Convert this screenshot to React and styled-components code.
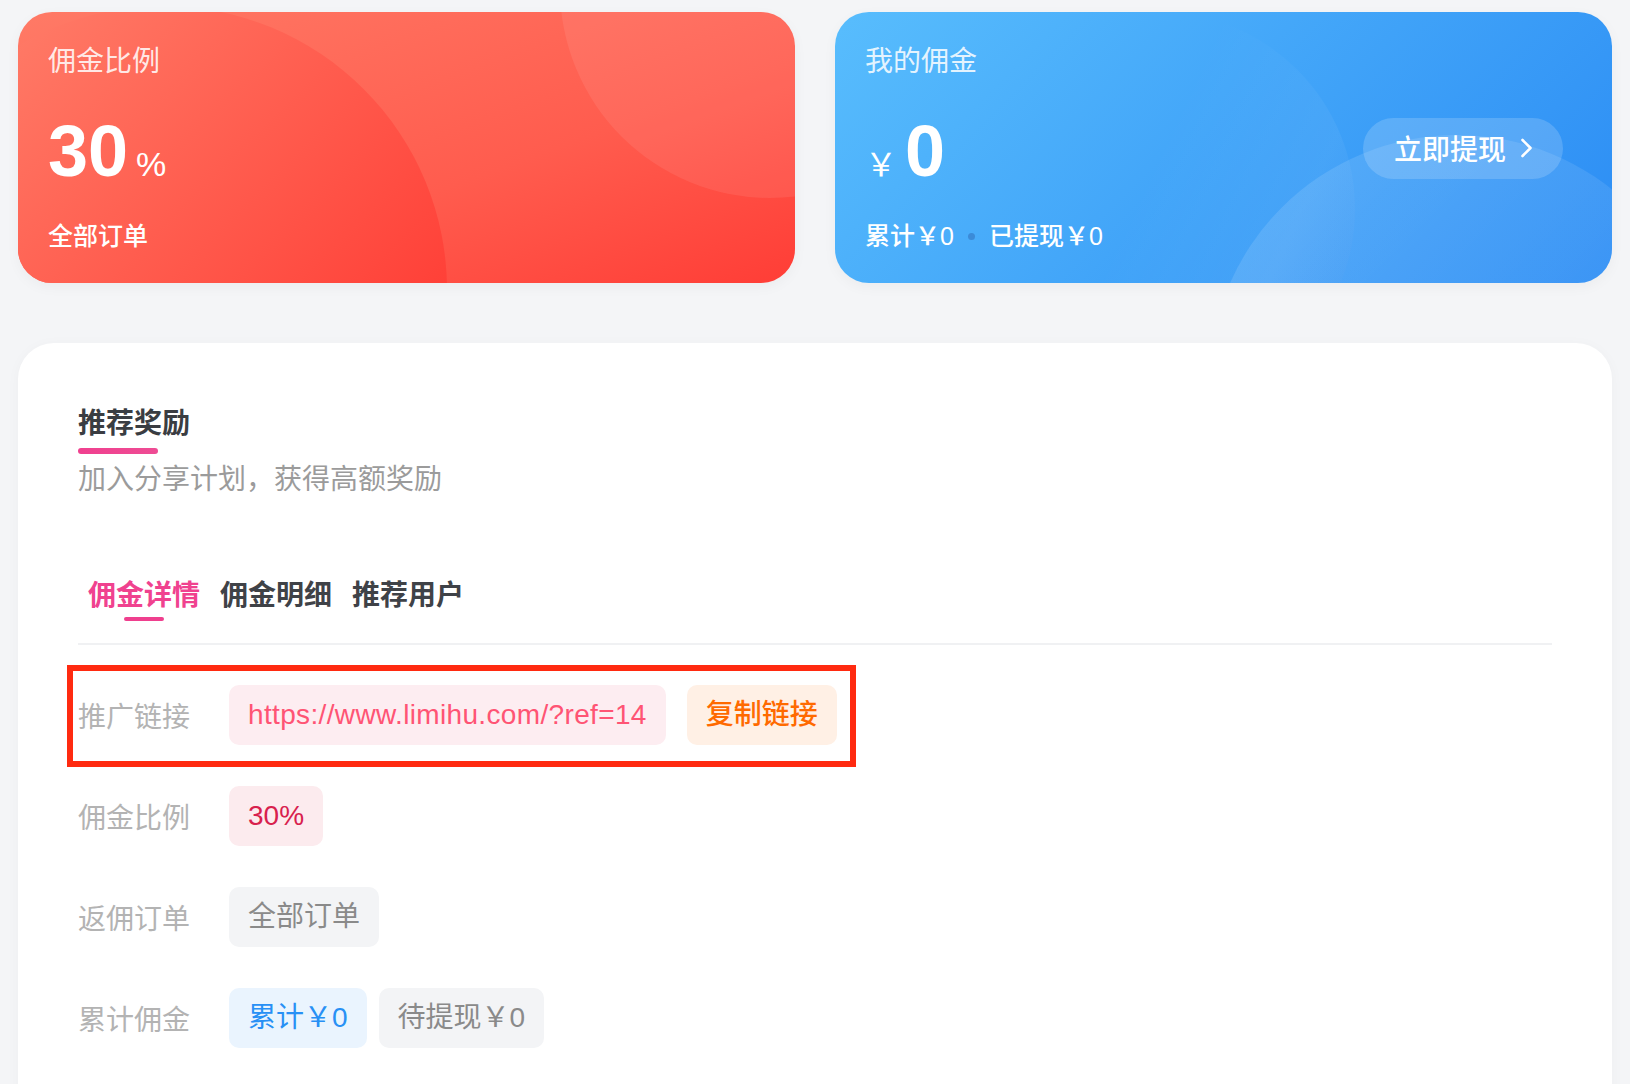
import React from 'react';
import styled, { createGlobalStyle } from 'styled-components';

const GlobalStyle = createGlobalStyle`
  html, body {
    margin: 0;
    padding: 0;
    height: 1084px;
    overflow: hidden;
    background: #f4f5f7;
  }

  body {
    font-family: "Liberation Sans", "Noto Sans CJK SC", sans-serif;
    -webkit-font-smoothing: antialiased;
  }
`;

const tones = {
  red: {
    bg: 'linear-gradient(160deg, #ff7a66 0%, #ff5c4e 60%, #ff3d36 100%)',
    bigCircle: { left: -139, top: -6, size: 568, bg: 'linear-gradient(135deg, #ff8771 0%, #ff2824 100%)' },
    smallCircle: { left: 542, top: -234, size: 420, bg: 'rgba(255, 255, 255, 0.08)' },
  },
  blue: {
    bg: 'linear-gradient(135deg, #58bdfd 0%, #2b8cf4 100%)',
    bigCircle: {
      left: 126,
      top: 0,
      size: 394,
      bg: 'linear-gradient(115deg, rgba(255,255,255,0) 45%, rgba(255,255,255,0.05) 75%, rgba(0,60,190,0.05) 100%)',
    },
    smallCircle: { left: 374, top: 123, size: 496, bg: 'linear-gradient(135deg, rgba(255,255,255,0.13), rgba(255,255,255,0.04))' },
  },
};

const circle = (c) => `
  left: ${c.left}px;
  top: ${c.top}px;
  width: ${c.size}px;
  height: ${c.size}px;
  background: ${c.bg};
`;

const Page = styled.div`
  padding: 12px 18px 0;
`;

const StatGrid = styled.div`
  display: grid;
  grid-template-columns: 1fr 1fr;
  gap: 40px;
`;

const StatCard = styled.div`
  position: relative;
  overflow: hidden;
  box-sizing: border-box;
  height: 271px;
  padding: 30px 30px 29px;
  border-radius: 34px;
  display: flex;
  align-items: center;
  justify-content: space-between;
  color: #fff;
  background: ${({ $tone }) => tones[$tone].bg};
  box-shadow: 0 4px 14px rgba(0, 0, 0, 0.04);

  &::before,
  &::after {
    content: '';
    position: absolute;
    border-radius: 50%;
    pointer-events: none;
  }

  &::before {
    ${({ $tone }) => circle(tones[$tone].bigCircle)}
  }

  &::after {
    ${({ $tone }) => circle(tones[$tone].smallCircle)}
  }
`;

const StatInfo = styled.div`
  position: relative;
  z-index: 1;
  display: flex;
  flex-direction: column;
  align-self: flex-start;
`;

const StatLabel = styled.div`
  font-size: 28px;
  line-height: 40px;
  color: rgba(255, 255, 255, 0.86);
`;

const StatValue = styled.div`
  display: flex;
  align-items: baseline;
  margin-top: 33px;
  height: 72px;
`;

const BigNumber = styled.span`
  font-size: 72px;
  line-height: 72px;
  font-weight: 700;
`;

const Unit = styled.span`
  font-size: ${({ $size }) => $size}px;
  line-height: ${({ $size }) => $size}px;
  margin: ${({ $after }) => ($after ? '0 0 0 8px' : '0 8px 0 0')};
`;

const StatFoot = styled.div`
  display: flex;
  align-items: center;
  margin-top: 31px;
  font-size: 25px;
  line-height: 36px;
  font-weight: 500;
`;

const Dot = styled.span`
  width: 7px;
  height: 7px;
  margin: 0 14px;
  border-radius: 50%;
  background: #3b8bd8;
`;

const WithdrawButton = styled.button`
  position: relative;
  z-index: 1;
  display: flex;
  align-items: center;
  gap: 14px;
  height: 61px;
  margin-right: 19px;
  padding: 0 30px 0 31px;
  border: none;
  border-radius: 31px;
  background: rgba(255, 255, 255, 0.17);
  color: #fff;
  font-family: inherit;
  font-size: 28px;
  font-weight: 500;
  cursor: pointer;

  svg {
    display: block;
  }
`;

const Panel = styled.section`
  margin-top: 60px;
  padding: 61px 60px 200px;
  border-radius: 36px;
  background: #fff;
  box-shadow: 0 2px 14px rgba(0, 0, 0, 0.03);
`;

const Title = styled.h2`
  margin: 0;
  font-size: 28px;
  line-height: 40px;
  font-weight: 700;
  color: #3a3d42;
`;

const TitleBar = styled.div`
  width: 80px;
  height: 6px;
  margin-top: 4px;
  border-radius: 3px;
  background: linear-gradient(90deg, #f0408f, #ee4c94);
`;

const Subtitle = styled.p`
  margin: 6px 0 0;
  font-size: 28px;
  line-height: 40px;
  color: #9b9b9b;
`;

const Tabs = styled.div`
  display: flex;
  margin-top: 76px;
`;

const Tab = styled.div`
  display: flex;
  flex-direction: column;
  align-items: center;
  padding: 0 10px;
  font-size: 28px;
  line-height: 40px;
  font-weight: 700;
  color: ${({ $active }) => ($active ? '#f0428f' : '#3f4247')};
  cursor: pointer;

  &::after {
    content: '';
    width: 40px;
    height: 4px;
    margin-top: 1px;
    border-radius: 2px;
    background: ${({ $active }) => ($active ? '#ef3f8e' : 'transparent')};
  }
`;

const Divider = styled.div`
  height: 2px;
  margin-top: 22px;
  background: #f0f1f3;
`;

const Rows = styled.div`
  display: flex;
  flex-direction: column;
  gap: 41px;
  margin-top: 40px;
`;

const Row = styled.div`
  position: relative;
  display: flex;
  align-items: center;
  height: 60px;

  ${({ $highlight }) =>
    $highlight &&
    `
    &::after {
      content: '';
      position: absolute;
      left: -11px;
      top: -20px;
      width: 789px;
      height: 102px;
      box-sizing: border-box;
      border: 6px solid #ff2a10;
      pointer-events: none;
    }
  `}
`;

const RowLabel = styled.div`
  flex-shrink: 0;
  width: 151px;
  font-size: 28px;
  color: #b3b3b3;
`;

const Chips = styled.div`
  display: flex;
  gap: 12px;
`;

const chipTones = {
  link: { bg: '#fdedf1', fg: '#ff5474' },
  rate: { bg: '#fcebee', fg: '#d8204d' },
  copy: { bg: '#fff0e5', fg: '#ff6a00' },
  grey: { bg: '#f3f4f6', fg: '#8a8a8a' },
  blue: { bg: '#eaf4fe', fg: '#2890f5' },
};

const Chip = styled.span`
  height: 60px;
  padding: 0 19px;
  margin-left: ${({ $gapBefore }) => $gapBefore || 0}px;
  border-radius: 10px;
  font-size: 28px;
  line-height: 60px;
  letter-spacing: ${({ $tone }) => ($tone === 'link' ? '0.35px' : '0')};
  font-weight: ${({ $tone }) => ($tone === 'copy' || $tone === 'rate' ? 500 : 400)};
  background: ${({ $tone }) => chipTones[$tone].bg};
  color: ${({ $tone }) => chipTones[$tone].fg};
  white-space: nowrap;
`;

const Chevron = () => (
  <svg width="13" height="20" viewBox="0 0 13 20" fill="none">
    <path d="M2.5 2l8 8-8 8" stroke="#fff" strokeWidth="2.6" strokeLinecap="round" strokeLinejoin="round" />
  </svg>
);

const App = () => (
  <Page>
    <GlobalStyle />
    <StatGrid>
      <StatCard $tone="red">
        <StatInfo>
          <StatLabel>佣金比例</StatLabel>
          <StatValue>
            <BigNumber>30</BigNumber>
            <Unit $size={34} $after>%</Unit>
          </StatValue>
          <StatFoot>全部订单</StatFoot>
        </StatInfo>
      </StatCard>

      <StatCard $tone="blue">
        <StatInfo>
          <StatLabel>我的佣金</StatLabel>
          <StatValue>
            <Unit $size={32}>￥</Unit>
            <BigNumber>0</BigNumber>
          </StatValue>
          <StatFoot>
            累计￥0
            <Dot />
            已提现￥0
          </StatFoot>
        </StatInfo>
        <WithdrawButton>
          立即提现
          <Chevron />
        </WithdrawButton>
      </StatCard>
    </StatGrid>

    <Panel>
      <Title>推荐奖励</Title>
      <TitleBar />
      <Subtitle>加入分享计划，获得高额奖励</Subtitle>

      <Tabs>
        <Tab $active>佣金详情</Tab>
        <Tab>佣金明细</Tab>
        <Tab>推荐用户</Tab>
      </Tabs>
      <Divider />

      <Rows>
        <Row $highlight>
          <RowLabel>推广链接</RowLabel>
          <Chips>
            <Chip $tone="link">https://www.limihu.com/?ref=14</Chip>
            <Chip $tone="copy" $gapBefore={9}>复制链接</Chip>
          </Chips>
        </Row>
        <Row>
          <RowLabel>佣金比例</RowLabel>
          <Chips>
            <Chip $tone="rate">30%</Chip>
          </Chips>
        </Row>
        <Row>
          <RowLabel>返佣订单</RowLabel>
          <Chips>
            <Chip $tone="grey">全部订单</Chip>
          </Chips>
        </Row>
        <Row>
          <RowLabel>累计佣金</RowLabel>
          <Chips>
            <Chip $tone="blue">累计￥0</Chip>
            <Chip $tone="grey">待提现￥0</Chip>
          </Chips>
        </Row>
      </Rows>
    </Panel>
  </Page>
);

export default App;
